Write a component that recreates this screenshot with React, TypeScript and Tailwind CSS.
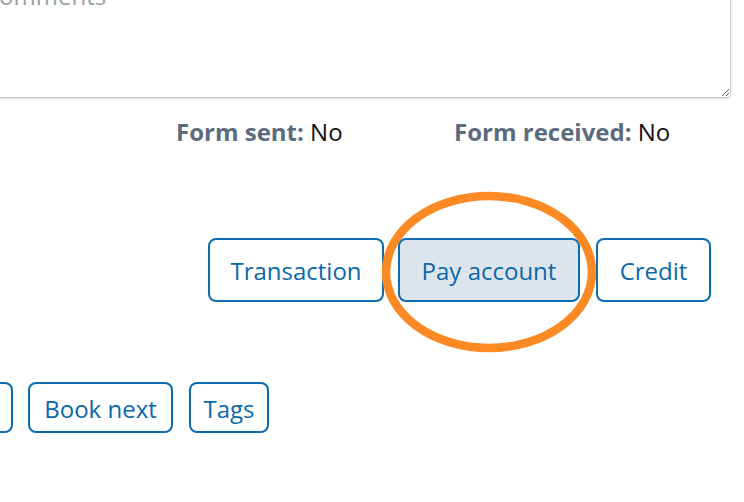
import React from "react";

const btn =
  "shrink-0 box-border border-2 border-[#0b6db0] rounded-[8px] text-[#0b68a8] bg-white leading-none flex items-center justify-center pt-[2px]";

export default function App() {
  return (
    <div
      className="relative w-[744px] h-[502px] overflow-hidden bg-white"
      style={{ fontFamily: '"Open Sans", "Noto Sans", sans-serif' }}
    >
      <textarea
        readOnly
        placeholder="Comments"
        className="block box-border w-[760px] h-[122px] -ml-[29px] -mt-[24px] border border-[#c9cdd1] rounded-[4px] px-[12px] pt-[1px] text-[24px] text-black placeholder:text-[#9aa0a6] shadow-[0_1px_2px_rgba(0,0,0,0.15)] outline-none"
      />

      <div className="flex mt-[18px] pl-[176px] text-[24px] leading-[32px]">
        <div className="w-[278px] shrink-0">
          <span className="font-bold text-[#5b6b7e]">Form sent:</span>
          <span className="text-[#111]"> No</span>
        </div>
        <div>
          <span className="font-bold text-[#5b6b7e]">Form received:</span>
          <span className="text-[#111]"> No</span>
        </div>
      </div>

      <div className="flex mt-[90px] pl-[208px] text-[24px]">
        <button className={`${btn} w-[176px] h-[64px]`}>Transaction</button>
        <button className={`${btn} w-[182px] h-[64px] ml-[14px] !bg-[#dce4ec]`}>
          Pay account
        </button>
        <button className={`${btn} w-[115px] h-[64px] ml-[16px]`}>Credit</button>
      </div>

      <div className="flex mt-[80px] text-[24px]">
        <button
          aria-label="More"
          className={`${btn} w-[120px] h-[51px] -ml-[107px]`}
        />
        <button className={`${btn} w-[145px] h-[51px] ml-[15px]`}>Book next</button>
        <button className={`${btn} w-[80px] h-[51px] ml-[16px]`}>Tags</button>
      </div>

      <svg
        className="absolute left-0 top-0 pointer-events-none"
        width="744"
        height="502"
        viewBox="0 0 744 502"
      >
        <ellipse
          cx="489"
          cy="272"
          rx="103"
          ry="76"
          fill="none"
          stroke="#fc8a24"
          strokeWidth="8.5"
        />
      </svg>
    </div>
  );
}
